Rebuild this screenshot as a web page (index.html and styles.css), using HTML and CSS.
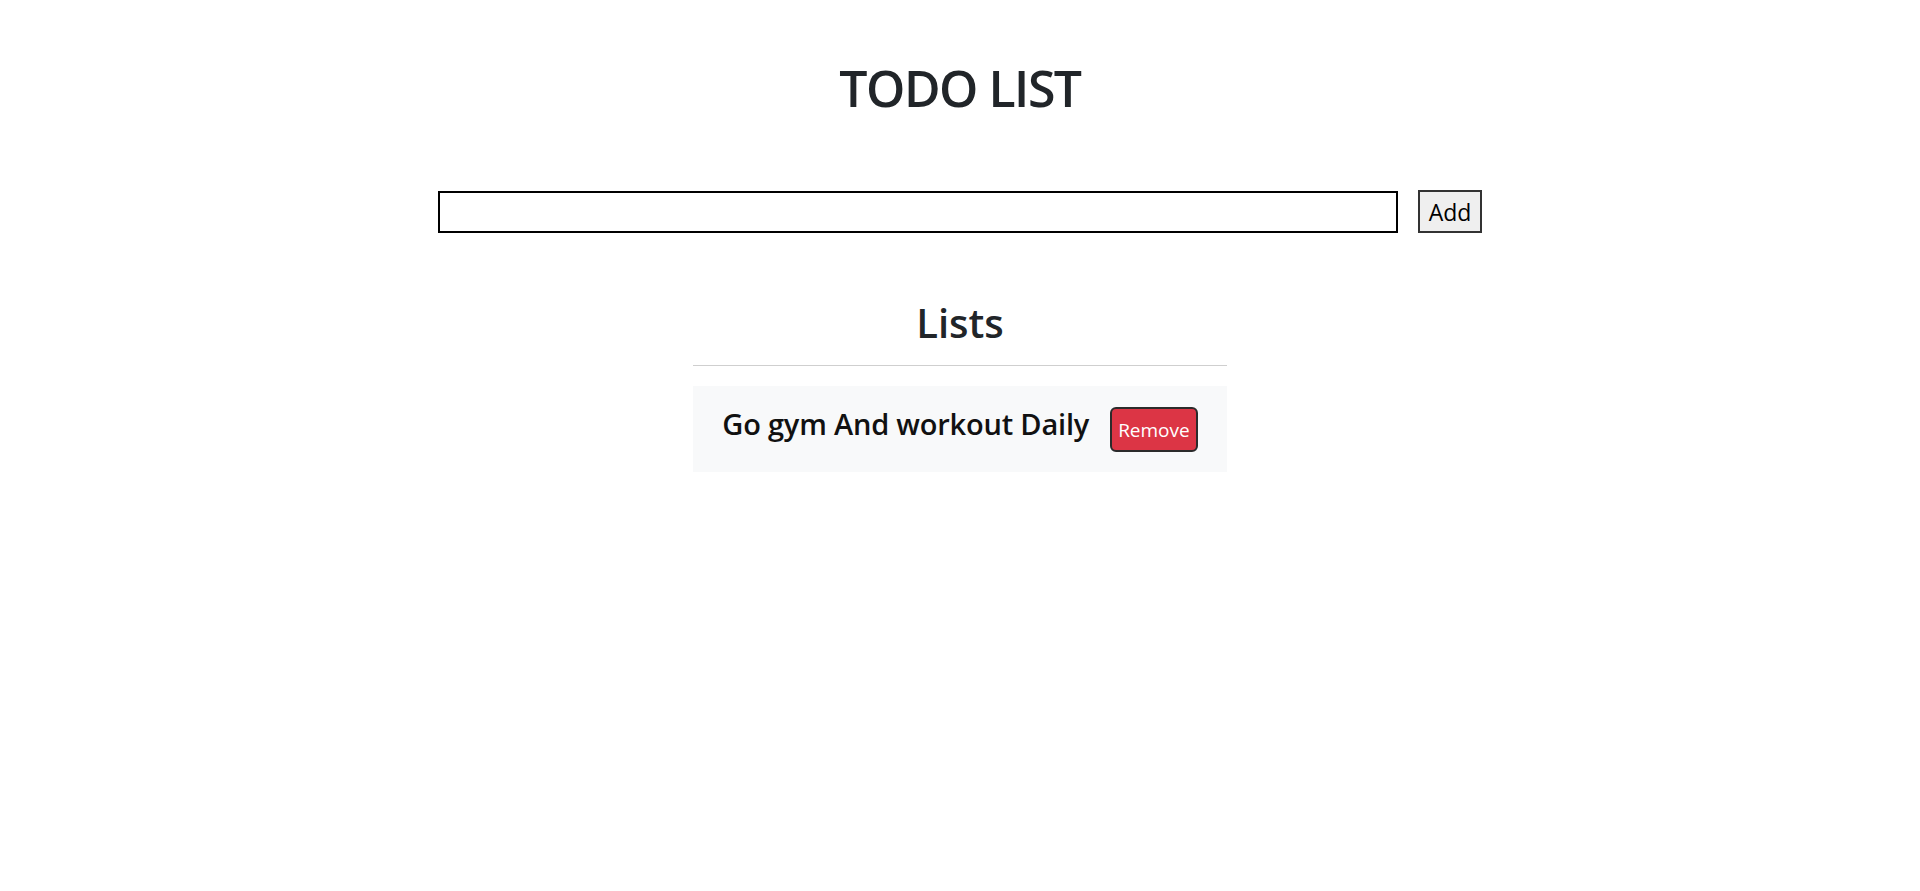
FILE: index.html
```html
<!DOCTYPE html>
<html lang="en">
<head>
<meta charset="utf-8">
<title>Todo List</title>
<link rel="stylesheet" href="styles.css">
</head>
<body>
<div class="app">
  <h1 class="title">TODO LIST</h1>
  <form class="add-form">
    <input class="add-input" type="text">
    <button class="add-btn" type="button">Add</button>
  </form>
  <section class="lists">
    <h2 class="lists-title">Lists</h2>
    <hr class="divider">
    <div class="item">
      <h4 class="item-text">Go gym And workout Daily</h4>
      <button class="remove-btn" type="button">Remove</button>
    </div>
  </section>
</div>
</body>
</html>
```
FILE: styles.css
```css
html, body {
  margin: 0;
  padding: 0;
  background: #fff;
}
body {
  font-family: "Open Sans", "Noto Sans", sans-serif;
  color: #212529;
}
.app {
  display: flex;
  flex-direction: column;
  align-items: center;
}
.title {
  margin: 58px 0 0;
  font-size: 50px;
  line-height: 60px;
  font-weight: 600;
  letter-spacing: -1.5px;
}
.add-form {
  margin-top: 72px;
  display: flex;
  gap: 20px;
  align-items: center;
}
.add-input {
  box-sizing: border-box;
  width: 960px;
  height: 42px;
  border: 2px solid #000;
  border-radius: 0;
  margin: 0;
  padding: 0 4px;
  font-size: 20px;
}
.add-btn {
  box-sizing: border-box;
  width: 64px;
  height: 43px;
  border: 2px solid #333;
  border-radius: 0;
  background: #efefef;
  color: #000;
  font-family: "Open Sans", sans-serif;
  font-size: 23px;
  padding: 0;
  margin: 0;
}
.lists {
  width: 534px;
  margin-top: 66px;
}
.lists-title {
  margin: 0;
  text-align: center;
  font-size: 40px;
  line-height: 48px;
  font-weight: 600;
  color: #212529;
}
.divider {
  margin: 18px 0 0;
  border: 0;
  border-top: 1px solid #cfcfcf;
  height: 0;
}
.item {
  margin-top: 20px;
  background: #f8f9fa;
  padding: 20px 0;
  display: flex;
  justify-content: center;
  align-items: flex-start;
  gap: 21px;
}
.item-text {
  margin: 0 0 10px;
  font-size: 29px;
  line-height: 36px;
  font-weight: 600;
  color: #111;
  letter-spacing: -0.2px;
}
.remove-btn {
  box-sizing: border-box;
  height: 45px;
  margin-top: 1px;
  padding: 0 6px;
  border: 2px solid #2b2b2b;
  border-radius: 6px;
  background: #dc3545;
  color: #fff;
  font-family: "Open Sans", sans-serif;
  font-size: 19px;
}
```
